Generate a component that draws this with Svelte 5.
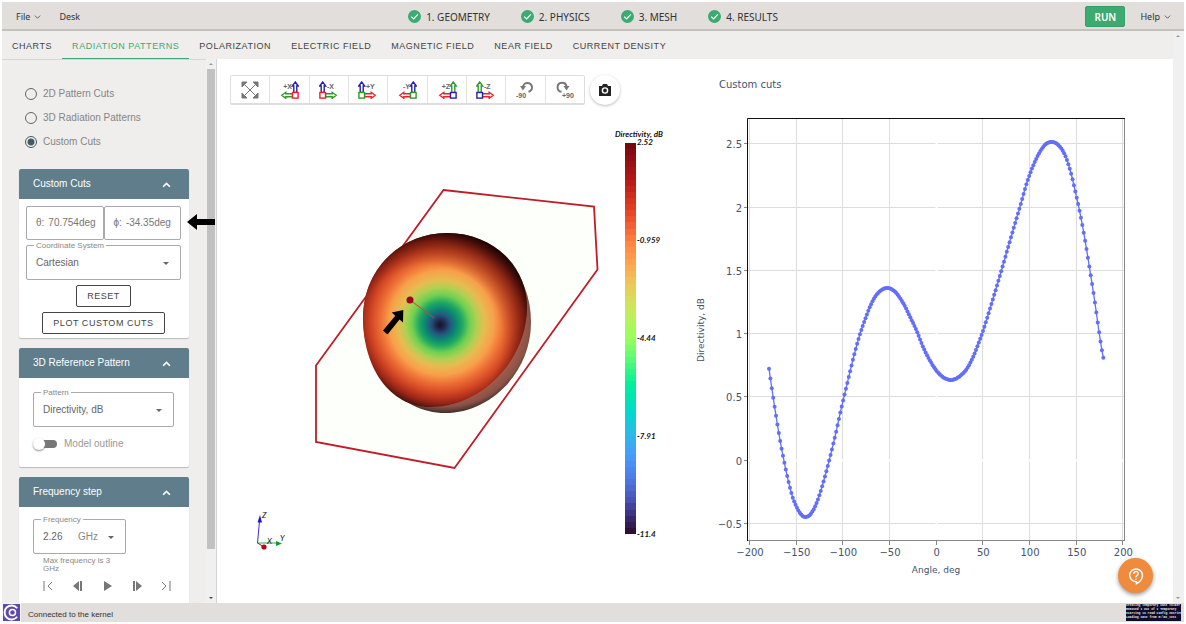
<script lang="ts">
  type Point = [number, number];

  const steps = ['1. GEOMETRY', '2. PHYSICS', '3. MESH', '4. RESULTS'];
  const tabs = [
    'CHARTS',
    'RADIATION PATTERNS',
    'POLARIZATION',
    'ELECTRIC FIELD',
    'MAGNETIC FIELD',
    'NEAR FIELD',
    'CURRENT DENSITY'
  ];
  const modes = ['2D Pattern Cuts', '3D Radiation Patterns', 'Custom Cuts'];

  let activeTab = $state('RADIATION PATTERNS');
  let mode = $state('Custom Cuts');
  let theta = $state('70.754deg');
  let phi = $state('-34.35deg');
  let frequency = $state('2.26');
  let outline = $state(false);

  const blue = '#2a1fa8';
  const green = '#2f9a2a';
  const red = '#f01f2b';

  // up / side / corner colours of each axis view
  const views = [
    { label: '+X', side: 'left', up: blue, arrow: green, corner: red },
    { label: '-X', side: 'right', up: blue, arrow: green, corner: red },
    { label: '+Y', side: 'right', up: blue, arrow: red, corner: green },
    { label: '-Y', side: 'left', up: blue, arrow: red, corner: green },
    { label: '+Z', side: 'left', up: green, arrow: red, corner: blue },
    { label: '-Z', side: 'right', up: green, arrow: red, corner: blue }
  ];

  const players = [
    { name: 'First', path: 'M2 1v10M10 2L6 6l4 4', solid: false },
    { name: 'Previous', path: 'M7 1v10L1 6zM8 1h2v10H8z', solid: true },
    { name: 'Play', path: 'M3 1l8 5-8 5z', solid: true },
    { name: 'Next', path: 'M5 1v10l6-5zM2 1h2v10H2z', solid: true },
    { name: 'Last', path: 'M10 1v10M2 2l4 4-4 4', solid: false }
  ];

  // colour map, top to bottom
  const stops: [number, number[]][] = [
    [0, [118, 8, 16]],
    [0.08, [176, 22, 24]],
    [0.17, [230, 66, 38]],
    [0.25, [255, 132, 66]],
    [0.3, [255, 162, 76]],
    [0.36, [236, 200, 90]],
    [0.42, [202, 232, 90]],
    [0.5, [152, 255, 92]],
    [0.56, [80, 250, 120]],
    [0.62, [0, 240, 154]],
    [0.69, [0, 218, 204]],
    [0.75, [48, 184, 232]],
    [0.8, [69, 158, 250]],
    [0.86, [78, 125, 232]],
    [0.92, [72, 84, 180]],
    [0.96, [58, 44, 120]],
    [1, [46, 16, 54]]
  ];
  const bands = 64;

  function mapColor(t: number) {
    const i = Math.max(1, stops.findIndex((s) => s[0] >= t));
    const [t0, a] = stops[i - 1];
    const [t1, b] = stops[i];
    const k = (t - t0) / (t1 - t0);
    return `rgb(${a.map((v, n) => Math.round(v + (b[n] - v) * k)).join(',')})`;
  }

  const scale = Array.from({ length: bands }, (_, i) => mapColor(i / (bands - 1)));
  const bandTop = (i: number) => Math.round(143 + (i * 391) / bands);
  const scaleLabels = ['2.52', '-0.959', '-4.44', '-7.91', '-11.4'];

  const front =
    'M363 318C363 268 402 233 447 233C493 233 527 266 527 307C527 360 482 407 430 407C390 407 363 368 363 318Z';
  const back =
    'M363 318C363 268 402 233 447 233C494 233 531 272 531 322C531 374 489 413 445 413C400 413 363 370 363 318Z';

  const xTicks = [-200, -150, -100, -50, 0, 50, 100, 150, 200];
  const yTicks = [-0.5, 0, 0.5, 1, 1.5, 2, 2.5];
  const xPos = (deg: number) => 936.7 + deg * 0.9335;
  const yPos = (db: number) => 460.7 - db * 126.5;
  const tick = (v: number) => String(v).replace('-', '−');

  const knots: Point[] = [
    [769, 368.7], [772.3, 391.7], [775.3, 411.3], [780, 440], [784.7, 464.3], [789.3, 485],
    [793.7, 500.3], [800, 513], [805, 517], [810.7, 514], [817, 502], [823.3, 482.3],
    [829.3, 460], [835.3, 435.3], [841.3, 408.3], [847.3, 383], [853.7, 356.7], [859.7, 335],
    [866.7, 315], [872.3, 301.7], [878.3, 292.7], [886.7, 288], [895, 291.7], [903.3, 303.3],
    [910, 316.7], [916.7, 331], [923.3, 347.5], [930, 360.7], [936.7, 371], [943.3, 377.3],
    [950.7, 380], [958.3, 377.3], [966.7, 369], [974, 355], [979, 342], [984, 328],
    [991.7, 303], [1000.7, 273], [1010, 240.7], [1020, 206.7], [1026.7, 183.3], [1033.3, 165.3],
    [1040, 151.7], [1046, 144], [1052, 142], [1058.3, 145], [1065, 155], [1071, 173.3],
    [1076.7, 197.7], [1080.7, 216.5], [1085, 240], [1090.3, 272.7], [1094.3, 298.3],
    [1098.3, 326.7], [1101.3, 346.7], [1103.3, 357.7]
  ];

  function slope(i: number) {
    const a = knots[Math.max(0, i - 1)];
    const b = knots[Math.min(knots.length - 1, i + 1)];
    return (b[1] - a[1]) / (b[0] - a[0]);
  }

  function sample(x: number): Point {
    const i = Math.min(knots.length - 1, Math.max(1, knots.findIndex((k) => k[0] >= x)));
    const [x0, y0] = knots[i - 1];
    const [x1, y1] = knots[i];
    const h = x1 - x0;
    const t = (x - x0) / h;
    const y =
      (2 * t ** 3 - 3 * t ** 2 + 1) * y0 +
      (t ** 3 - 2 * t ** 2 + t) * h * slope(i - 1) +
      (3 * t ** 2 - 2 * t ** 3) * y1 +
      (t ** 3 - t ** 2) * h * slope(i);
    return [x, y];
  }

  const samples = 240;
  const trace = Array.from({ length: samples }, (_, i) =>
    sample(769 + (334.3 * i) / (samples - 1))
  );
</script>

{#snippet caret()}
  <svg class="caret" viewBox="0 0 8 8"><path d="M1 3h6L4 6z" /></svg>
{/snippet}

{#snippet chevron()}
  <svg class="chevron" viewBox="0 0 8 8"><path d="M1 3l3 3 3-3" /></svg>
{/snippet}

{#snippet cardHead(title: string)}
  <button class="card-head">
    <span>{title}</span>
    <svg viewBox="0 0 8 8"><path d="M1 6l3-3 3 3" /></svg>
  </button>
{/snippet}

<div class="app">
  <header class="topbar">
    <nav class="menus">
      <button class="menu">File {@render chevron()}</button>
      <button class="menu">Desk</button>
    </nav>
    <nav class="steps">
      {#each steps as step}
        <button class="step">
          <svg viewBox="0 0 14 14">
            <circle cx="7" cy="7" r="7" fill="#3bab70" />
            <path d="M3.5 7.2l2.5 2.4 4.6-4.8" />
          </svg>
          {step}
        </button>
      {/each}
    </nav>
    <div class="actions">
      <button class="run">RUN</button>
      <button class="menu">Help {@render chevron()}</button>
    </div>
  </header>

  <div class="body">
    <div class="content">
      <nav class="tabs">
        {#each tabs as tab}
          <button class="tab" class:active={tab === activeTab} onclick={() => (activeTab = tab)}>
            {tab}
          </button>
        {/each}
      </nav>

      <div class="workspace">
        <aside class="sidebar">
          <div class="panel">
            <div class="modes">
              {#each modes as item}
                <label class="radio">
                  <input type="radio" name="mode" value={item} bind:group={mode} />
                  {item}
                </label>
              {/each}
            </div>

            <section class="card">
              {@render cardHead('Custom Cuts')}
              <div class="card-body cuts">
                <div class="angles">
                  <label class="angle">θ: <input bind:value={theta} /></label>
                  <label class="angle">ϕ: <input bind:value={phi} /></label>
                </div>
                <div class="field">
                  <label for="coords">Coordinate System</label>
                  <select id="coords"><option>Cartesian</option></select>
                  {@render caret()}
                </div>
                <button class="outlined">RESET</button>
                <button class="outlined">PLOT CUSTOM CUTS</button>
              </div>
            </section>

            <section class="card">
              {@render cardHead('3D Reference Pattern')}
              <div class="card-body reference">
                <div class="field">
                  <label for="pattern">Pattern</label>
                  <select id="pattern"><option>Directivity, dB</option></select>
                  {@render caret()}
                </div>
                <label class="switch">
                  <input type="checkbox" role="switch" bind:checked={outline} />
                  Model outline
                </label>
              </div>
            </section>

            <section class="card">
              {@render cardHead('Frequency step')}
              <div class="card-body frequency">
                <div class="field">
                  <label for="freq">Frequency</label>
                  <input id="freq" bind:value={frequency} />
                  <select class="unit" aria-label="Unit"><option>GHz</option></select>
                  {@render caret()}
                </div>
                <p class="hint">Max frequency is 3 GHz</p>
                <div class="player">
                  {#each players as p}
                    <button aria-label={p.name}>
                      <svg viewBox="0 0 12 12" class:solid={p.solid}><path d={p.path} /></svg>
                    </button>
                  {/each}
                </div>
              </div>
            </section>
          </div>
          <div class="scrollbar">
            <svg viewBox="0 0 10 10"><path d="M3 6h4L5 4z" /></svg>
            <div class="thumb"></div>
            <svg class="down" viewBox="0 0 10 10"><path d="M3 4h4L5 6z" /></svg>
          </div>
          <svg class="pointer" viewBox="0 0 28 16">
            <path d="M0 8L10 0v5h18v6H10v5z" />
          </svg>
        </aside>

        <main class="viewer">
          <div class="tools">
            <div class="toolbar">
              <button aria-label="Fit view">
                <svg class="fit" viewBox="0 0 18 18">
                  <path d="M3 3l12 12M15 3L3 15" />
                  <path d="M1 1h5L1 6zM17 1v5l-5-5zM1 17v-5l5 5zM17 17h-5l5-5z" />
                </svg>
              </button>
              {#each views as v}
                <button aria-label="View {v.label}">
                  <svg class="axis" viewBox={v.side === 'left' ? '-2 0 20 18' : '0 0 20 18'}>
                    <g transform={v.side === 'right' ? 'translate(18 0) scale(-1 1)' : undefined}>
                      <path stroke={v.up} d="M14.300 1l3 4h-1.500v6.500h-3V5h-1.500z" />
                      <path stroke={v.arrow} d="M.8 14.300l4-3v1.500h6.700v3H4.800v1.500z" />
                      <rect stroke={v.corner} x="11.500" y="11.500" width="5.600" height="5.600" />
                    </g>
                    <text x={v.side === 'left' ? 11 : 8} y="8" text-anchor={v.side === 'left' ? 'end' : 'start'}>
                      {v.label}
                    </text>
                  </svg>
                </button>
              {/each}
              <button aria-label="Rotate -90">
                <svg class="turn" viewBox="0 0 18 18">
                  <path d="M7 6.500a4.500 4.500 0 1 1 5.500 4.300" />
                  <path class="head" d="M4 5h6L7 9.500z" />
                  <text x="0" y="17">-90</text>
                </svg>
              </button>
              <button aria-label="Rotate +90">
                <svg class="turn" viewBox="0 0 18 18">
                  <path d="M10.500 5.500a4.500 4.500 0 1 0-5 5.300" />
                  <path class="head" d="M7.500 5h6L10.500 9.500z" />
                  <text x="6" y="17">+90</text>
                </svg>
              </button>
            </div>
            <button class="camera" aria-label="Screenshot">
              <svg viewBox="0 0 14 14">
                <path d="M1 3h3l1-2h4l1 2h3v10H1z" />
                <circle cx="7" cy="7.500" r="2.600" />
              </svg>
            </button>
          </div>

          <svg class="scene" viewBox="217 120 478 483" preserveAspectRatio="xMidYMin">
            <defs>
              <radialGradient id="pattern-map" gradientUnits="userSpaceOnUse" cx="443" cy="321" r="90" fx="440" fy="325">
                <stop offset="0" stop-color="#14122a" />
                <stop offset=".05" stop-color="#1f2a4e" />
                <stop offset=".11" stop-color="#26567f" />
                <stop offset=".17" stop-color="#0a8573" />
                <stop offset=".24" stop-color="#1fa862" />
                <stop offset=".32" stop-color="#6fd052" />
                <stop offset=".4" stop-color="#b0d052" />
                <stop offset=".48" stop-color="#e6bc52" />
                <stop offset=".58" stop-color="#f8a04a" />
                <stop offset=".68" stop-color="#ee7036" />
                <stop offset=".8" stop-color="#d04422" />
                <stop offset=".91" stop-color="#962416" />
                <stop offset="1" stop-color="#35100b" />
              </radialGradient>
              <radialGradient id="pattern-shade" gradientUnits="userSpaceOnUse" cx="429" cy="339" r="122">
                <stop offset=".6" stop-color="#1a0000" stop-opacity="0" />
                <stop offset=".8" stop-color="#1a0000" stop-opacity=".3" />
                <stop offset="1" stop-color="#0c0000" stop-opacity=".95" />
              </radialGradient>
              <radialGradient id="back-shade" gradientUnits="userSpaceOnUse" cx="445" cy="322" r="91">
                <stop offset=".8" stop-color="#a8604e" />
                <stop offset=".93" stop-color="#8b5246" />
                <stop offset="1" stop-color="#3f302e" />
              </radialGradient>
            </defs>

            <path class="plane" d="M443.500 190L594 206.500l3.500 63L454.500 468 316 442v-76.500z" />
            <path d={back} fill="url(#back-shade)" />
            <path d={front} fill="url(#pattern-map)" />
            <path d={front} fill="url(#pattern-shade)" />
            <path class="ray" d="M410 300l24 18" />
            <circle cx="410" cy="300" r="3.500" fill="#99091b" />
            <path d="M403.300 310l-11.500 2.500 3.500 3.200L383 330.500l4.500 4 12-15 3.500 3z" />

            <text class="scale-title" x="615" y="137">Directivity, dB</text>
            <g shape-rendering="crispEdges">
              {#each scale as color, i}
                <rect x="625" y={bandTop(i)} width="11" height={bandTop(i + 1) - bandTop(i)} fill={color} />
              {/each}
            </g>
            {#each scaleLabels as label, i}
              <text class="scale-label" x="637" y={145 + i * 98}>{label}</text>
            {/each}

            <g class="triad">
              <path stroke="#3a32c0" d="M257.500 543l2-22" />
              <path fill="#2018c8" d="M257.500 522.500l2.500-7.500 2 7.500z" />
              <path stroke="#2cae50" d="M257.500 543h19" />
              <path fill="#0a9a2e" d="M276 541l6 2.500-6 2.500z" />
              <path stroke="#a01818" d="M257.500 543l5 3" />
              <circle cx="264" cy="547" r="2.600" fill="#a50d18" />
              <text x="262" y="518">Z</text>
              <text x="280" y="541">Y</text>
              <text x="267" y="544">X</text>
            </g>
          </svg>
        </main>

        <section class="chart">
          <svg viewBox="695 59 478 544" preserveAspectRatio="xMidYMin">
            <text class="chart-title" x="719" y="88">Custom cuts</text>
            {#each xTicks as t}
              {#if t !== 0}
                <path class="grid" d="M{Math.round(xPos(t)) - 0.5} 119V540" />
              {/if}
              <path class="mark" d="M{Math.round(xPos(t)) - 0.5} 541v4" />
              <text text-anchor="middle" x={xPos(t)} y="556">{tick(t)}</text>
            {/each}
            {#each yTicks as t}
              {#if t !== 0}
                <path class="grid" d="M748 {Math.round(yPos(t)) - 0.5}H1124" />
              {/if}
              <path class="mark" d="M744 {Math.round(yPos(t)) - 0.5}h4" />
              <text text-anchor="end" x="742" y={yPos(t) + 4}>{tick(t)}</text>
            {/each}
            <path class="zero" d="M748 460.500H1124M936.500 119V540" />
            <path class="frame soft" d="M1124.500 118v423M747 540.500h378" />
            <path class="frame" d="M747.500 541V118.500H1125" />
            <polyline class="trace" points={trace.join(' ')} />
            {#each trace as [x, y]}
              <circle cx={x} cy={y} r="2" fill="#636efa" />
            {/each}
            <text class="axis-title" text-anchor="middle" x="936" y="573">Angle, deg</text>
            <text class="axis-title" text-anchor="middle" transform="translate(704 330) rotate(-90)">
              Directivity, dB
            </text>
          </svg>
          <button class="help" aria-label="Ask for help">
            <svg viewBox="0 0 18 20">
              <path d="M9.500 16.500v2.200c4-2 6.800-5.300 6.800-9.500A7.200 7.200 0 1 0 9 16.500z" />
              <path d="M6.600 7.400A2.400 2.400 0 1 1 10.300 9.300C9.400 9.900 9 10.300 9 11.400M9 12.700v1.600" />
            </svg>
          </button>
        </section>
      </div>
    </div>
    <div class="scrollbar page">
      <svg viewBox="0 0 10 10"><path d="M3 6h4L5 4z" /></svg>
      <svg viewBox="0 0 10 10"><path d="M3 4h4L5 6z" /></svg>
    </div>
  </div>

  <footer class="status">
    <svg class="logo" viewBox="0 0 20 20">
      <rect width="20" height="20" fill="#5f4aa8" />
      <path d="M16 5.500A7.400 7.400 0 1 0 16 14.500" />
      <circle class="inner" cx="11" cy="10" r="3.200" />
    </svg>
    <span>Connected to the kernel</span>
    <pre class="console">Creating temporary case folder
Removed 1 out of 1 Temporary
Starting to read config entries
Loading case from m:\mt_test</pre>
  </footer>
</div>

<style>
  :global(body) {
    margin: 0;
    background: #fff;
  }

  .app {
    display: flex;
    flex-direction: column;
    box-sizing: border-box;
    height: 100vh;
    padding: 2px;
    overflow: hidden;
    font-family: 'Liberation Sans', Arial, sans-serif;
    font-size: 10px;
    line-height: 12px;
    color: #666;
  }

  .app :global(*) {
    box-sizing: border-box;
  }

  button,
  input,
  select {
    margin: 0;
    padding: 0;
    border: 0;
    background: none;
    color: inherit;
    font: inherit;
    appearance: none;
    outline: none;
  }

  svg {
    display: block;
    flex: none;
  }

  /* top bar */
  .topbar {
    display: grid;
    grid-template-columns: 1fr auto 1fr;
    align-items: center;
    flex: none;
    height: 29px;
    padding-top: 2px;
    background: #e1dedb;
    border-bottom: 2px solid #c3c1be;
    font-family: 'Noto Sans', sans-serif;
    color: #333;
  }

  .menus,
  .steps,
  .actions,
  .menu,
  .step {
    display: flex;
    align-items: center;
  }

  .menus {
    gap: 18px;
    padding-left: 14px;
  }

  .menu {
    gap: 4px;
    font-size: 9px;
  }

  .chevron {
    width: 7px;
    height: 7px;
    fill: none;
    stroke: #555;
  }

  .steps {
    gap: 31px;
  }

  .step {
    gap: 5px;
  }

  .step svg {
    width: 13px;
    height: 13px;
  }

  .step path {
    fill: none;
    stroke: #fff;
    stroke-width: 1.3;
  }

  .actions {
    justify-content: flex-end;
    gap: 15px;
    padding-right: 13px;
  }

  .run {
    width: 40px;
    height: 21px;
    border: 1px solid #34a067;
    border-radius: 2px;
    background: #3bab70;
    color: #fff;
    font-weight: 600;
  }

  /* tabs and panes */
  .body,
  .workspace {
    display: flex;
    flex: 1;
    min-height: 0;
  }

  .content {
    display: flex;
    flex-direction: column;
    flex: 1;
    min-width: 0;
  }

  .tabs {
    display: flex;
    flex: none;
    height: 28px;
    background: #efeeec;
  }

  .tab {
    padding: 2px 10px 0;
    border-bottom: 1px solid transparent;
    font-size: 9px;
    letter-spacing: 0.06em;
    color: #444;
  }

  .tab.active {
    border-color: #3bab70;
    color: #3bab70;
  }

  .sidebar {
    position: relative;
    display: flex;
    flex: none;
    width: 215px;
    border-right: 1px solid #d4d4d4;
    background: #efeeec;
  }

  .panel {
    display: flex;
    flex-direction: column;
    flex: 1;
    gap: 10px;
    padding: 22px 17px 0;
    border-top: 1px solid #d8d7d5;
    overflow: hidden;
  }

  .modes {
    padding: 0 6px 5px;
  }

  .radio {
    display: flex;
    align-items: center;
    gap: 6px;
    height: 24px;
    color: #858585;
  }

  .radio input {
    width: 12px;
    height: 12px;
    border: 1px solid #666;
    border-radius: 50%;
  }

  .radio input:checked {
    border-color: #455a64;
    background: radial-gradient(circle, #455a64 3px, transparent 4px);
  }

  .scrollbar {
    display: flex;
    flex-direction: column;
    justify-content: space-between;
    flex: none;
    width: 10px;
    background: #f0f0f0;
  }

  .scrollbar svg {
    width: 10px;
    height: 10px;
    fill: #999;
  }

  .scrollbar .down {
    fill: #444;
  }

  .thumb {
    flex: 1;
    width: 8px;
    margin: 0 1px 44px;
    background: #c1c1c1;
  }

  .scrollbar.page {
    width: 11px;
  }

  .pointer {
    position: absolute;
    top: 155px;
    right: 1px;
    width: 28px;
    height: 16px;
  }

  /* cards */
  .card {
    flex: none;
    border-radius: 2px;
    background: #fff;
    box-shadow: 0 1px 1px #bbb;
  }

  .card-head {
    display: flex;
    align-items: center;
    justify-content: space-between;
    width: 100%;
    height: 30px;
    padding: 0 18px 0 14px;
    border-radius: 2px 2px 0 0;
    background: #607d8b;
    color: #fff;
  }

  .card-head svg {
    width: 9px;
    height: 9px;
    fill: none;
    stroke: #fff;
    stroke-width: 1.5;
  }

  .card-body {
    display: flex;
    flex-direction: column;
  }

  .cuts {
    align-items: center;
    gap: 5px;
    padding: 7px 8px 4px 7px;
  }

  .reference {
    gap: 6px;
    padding: 14px 15px 13px 14px;
  }

  .frequency {
    padding: 12px 15px 13px 14px;
  }

  .angles {
    display: flex;
    width: 100%;
  }

  .angle {
    display: flex;
    align-items: center;
    flex: 1;
    gap: 4px;
    height: 34px;
    padding: 0 4px 0 9px;
    border: 1px solid #aaa;
    border-radius: 2px;
    color: #777;
    white-space: nowrap;
  }

  .angle input {
    flex: 1;
    width: 0;
  }

  .field {
    position: relative;
    display: flex;
    align-items: center;
    width: 100%;
    height: 35px;
    padding: 0 10px 0 9px;
    border: 1px solid #aaa;
    border-radius: 2px;
    color: #666;
  }

  /* the caption sits across the top border */
  .field label {
    position: absolute;
    top: -4px;
    left: 7px;
    padding: 0 2px;
    background: #fff;
    color: #888;
    font-size: 8px;
    line-height: 8px;
  }

  .field select {
    flex: 1;
    min-width: 0;
  }

  .caret {
    width: 8px;
    height: 8px;
    fill: #666;
  }

  .outlined {
    height: 22px;
    padding: 0 10px;
    border: 1px solid #444;
    border-radius: 2px;
    color: #444;
    font-size: 9px;
    letter-spacing: 0.06em;
  }

  .switch {
    display: flex;
    align-items: center;
    gap: 7px;
    height: 21px;
    color: #999;
  }

  .switch input {
    position: relative;
    width: 24px;
    height: 8px;
    border-radius: 4px;
    background: linear-gradient(90deg, transparent 6px, #777 6px);
  }

  .switch input::before {
    content: '';
    position: absolute;
    top: -2px;
    left: 0;
    width: 12px;
    height: 12px;
    border-radius: 50%;
    background: #fff;
    box-shadow: 0 1px 2px #888;
  }

  .switch input:checked::before {
    left: 12px;
  }

  .frequency .field {
    width: 93px;
  }

  .frequency .field input {
    width: 35px;
  }

  .unit {
    color: #888;
  }

  .hint {
    width: 76px;
    margin: 3px 0 7px 10px;
    color: #888;
    font-size: 8px;
    line-height: 8px;
  }

  .player {
    display: flex;
    justify-content: space-between;
    padding: 0 2px 0 9px;
  }

  .player svg {
    width: 12px;
    height: 12px;
    fill: none;
    stroke: #777;
  }

  .player .solid {
    fill: #777;
    stroke: none;
  }

  /* 3D view */
  .viewer,
  .chart {
    position: relative;
    display: flex;
    flex-direction: column;
    flex: 1;
    min-width: 0;
  }

  .tools {
    display: flex;
    align-items: center;
    flex: none;
    gap: 5px;
    padding: 16px 12px 15px 13px;
  }

  .toolbar {
    display: flex;
    flex: 0 1 355px;
    height: 30px;
    border: 1px solid #ddd;
    border-bottom-width: 2px;
    border-radius: 2px;
  }

  .toolbar button {
    display: flex;
    align-items: center;
    justify-content: center;
    flex: 1;
  }

  .toolbar button + button {
    border-left: 1px solid #e2e2e2;
  }

  .toolbar svg {
    width: 18px;
    height: 18px;
  }

  .toolbar .axis {
    width: 20px;
  }

  .toolbar text {
    fill: #666;
    font-size: 7px;
    font-weight: bold;
  }

  .fit {
    fill: #777;
    stroke: #777;
  }

  .axis path,
  .axis rect {
    fill: #fff;
    stroke-width: 1.4;
  }

  .turn path {
    fill: none;
    stroke: #777;
    stroke-width: 2;
  }

  .turn .head {
    fill: #777;
    stroke: none;
  }

  .camera {
    display: flex;
    align-items: center;
    justify-content: center;
    width: 30px;
    height: 30px;
    border-radius: 50%;
    box-shadow: 0 1px 3px #bbb;
  }

  .camera svg {
    width: 14px;
    height: 14px;
    fill: #222;
  }

  .camera circle {
    fill: #222;
    stroke: #fff;
    stroke-width: 1.4;
  }

  .scene,
  .chart > svg {
    flex: 1;
    width: 100%;
    min-height: 0;
  }

  .plane {
    fill: #fdfffb;
    stroke: #c01c2a;
    stroke-width: 1.8;
  }

  .ray {
    stroke: #d9402a;
  }

  .scale-title,
  .scale-label,
  .triad text {
    fill: #111;
    font-family: Lato, sans-serif;
    font-size: 8px;
    font-style: italic;
    font-weight: bold;
  }

  .triad text {
    font-weight: normal;
  }

  /* chart */
  .chart text {
    fill: #42536f;
    font-family: 'DejaVu Sans', Verdana, sans-serif;
    font-size: 10px;
  }

  .chart .axis-title {
    font-size: 9px;
  }

  .grid {
    stroke: #ddd;
  }

  .mark {
    stroke: #888;
  }

  .zero {
    stroke: #fff;
    stroke-width: 2;
  }

  .frame {
    fill: none;
    stroke: #111;
  }

  .frame.soft {
    stroke: #888;
  }

  .trace {
    fill: none;
    stroke: #636efa;
    stroke-width: 1.3;
  }

  .help {
    position: absolute;
    right: 20px;
    bottom: 10px;
    display: flex;
    align-items: center;
    justify-content: center;
    width: 35px;
    height: 35px;
    border-radius: 50%;
    background: #f08a3c;
    box-shadow: 0 2px 4px #999;
  }

  .help svg {
    width: 16px;
    height: 18px;
    fill: none;
    stroke: #fff;
    stroke-width: 1.6;
  }

  /* status bar */
  .status {
    display: flex;
    align-items: center;
    flex: none;
    gap: 7px;
    height: 19px;
    padding-right: 3px;
    background: #e1dedb;
    color: #333;
    font-size: 8px;
  }

  .status span {
    padding-top: 4px;
  }

  .logo {
    width: 19px;
    height: 19px;
    fill: none;
    stroke: #fff;
    stroke-width: 2;
  }

  .logo .inner {
    stroke-width: 1.6;
  }

  .console {
    width: 55px;
    height: 17px;
    margin: 0 0 0 auto;
    overflow: hidden;
    background: #0d0d2b;
    color: #eee;
    font-family: 'Liberation Mono', monospace;
    font-size: 3px;
    font-weight: bold;
    line-height: 4px;
  }
</style>
